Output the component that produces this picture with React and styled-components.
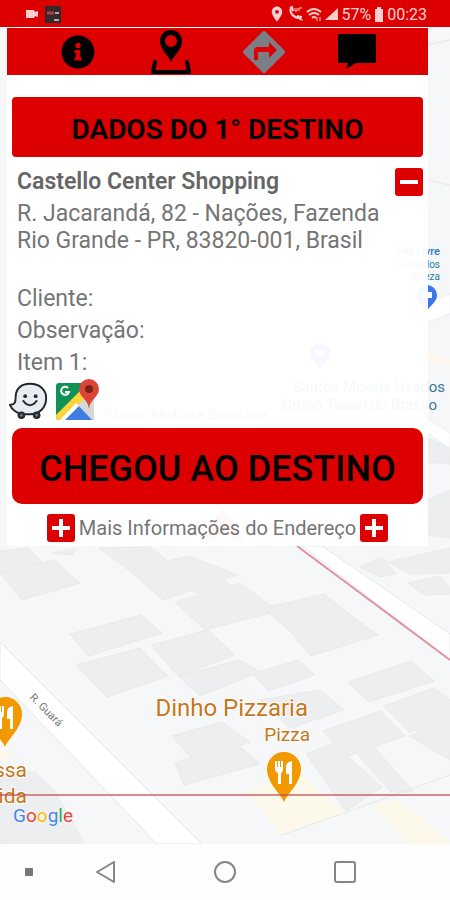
import React from "react";
import styled, { createGlobalStyle } from "styled-components";
import { FaInfoCircle } from "react-icons/fa";
import { MdLocationOn } from "react-icons/md";

const red = "#dc0000";
const pale = "#ffd0d0";

const GlobalStyle = createGlobalStyle`
  * {
    box-sizing: border-box;
  }
  body {
    margin: 0;
    font-family: Roboto, "Liberation Sans", sans-serif;
  }
  button {
    font-family: inherit;
    border: 0;
    padding: 0;
    cursor: pointer;
  }
  svg {
    display: block;
  }
`;

const Screen = styled.div`
  display: flex;
  flex-direction: column;
  min-height: 100vh;
  background-color: #fff;
`;

const StatusBar = styled.header`
  display: flex;
  align-items: center;
  justify-content: space-between;
  height: 27px;
  padding: 1px 23px 0 24px;
  background-color: ${red};
  color: ${pale};
  font-size: 16px;
`;

const StatusGroup = styled.div`
  display: flex;
  align-items: center;
  gap: ${props => props.$gap}px;
`;

const MapArea = styled.main`
  position: relative;
  flex: 1;
  padding: 1px 22px 0 7px;
  background-color: #f5f7f8;
`;

const MapCanvas = styled.svg`
  position: absolute;
  top: 0;
  left: 0;
  width: 100%;
  height: 100%;
`;

const Brand = styled.a`
  position: absolute;
  left: 13px;
  bottom: 17px;
  font-size: 19px;
  line-height: 22px;
  text-decoration: none;
  text-shadow: 0 0 2px #fff;
`;

const Letter = styled.span`
  color: ${props => props.color};
`;

const Panel = styled.section`
  position: relative;
  padding-bottom: 4px;
  background-color: rgba(255, 255, 255, 0.95);
  color: #757575;
`;

const Toolbar = styled.nav`
  display: grid;
  grid-template-columns: repeat(4, 1fr);
  height: 47px;
  padding: 0 24px;
  background-color: ${red};
`;

const ToolButton = styled.button`
  display: flex;
  align-items: center;
  justify-content: center;
  background: none;
  color: #000;
`;

const Body = styled.div`
  display: flex;
  flex-direction: column;
  padding: 22px 5px 0;
`;

const MainButton = styled.button`
  height: ${props => (props.$large ? 76 : 60)}px;
  padding-top: ${props => (props.$large ? 6 : 4)}px;
  border-radius: ${props => (props.$large ? 10 : 4)}px;
  background-color: ${red};
  color: #000;
  font-size: ${props => (props.$large ? 36 : 28)}px;
  font-weight: ${props => (props.$large ? 500 : 600)};
  white-space: nowrap;
`;

const Place = styled.div`
  display: flex;
  justify-content: space-between;
  padding: 11px 0 0 5px;
`;

const Title = styled.h1`
  margin: 0 0 4px;
  font-size: 23px;
  line-height: 28px;
  font-weight: 600;
  color: #666;
`;

const Address = styled.p`
  margin: 0;
  font-size: 23px;
  line-height: 27px;
`;

const Details = styled.ul`
  list-style: none;
  margin: 29px 0 0;
  padding: 0 5px;
  font-size: 23px;
  line-height: 32px;
`;

const Apps = styled.div`
  display: flex;
  gap: 6px;
  height: 49px;
  margin-left: -4px;
`;

const AppButton = styled.button`
  background: none;
  width: 42px;
  height: 42px;
`;

const SquareButton = styled.button`
  display: flex;
  flex: none;
  align-items: center;
  justify-content: center;
  width: 28px;
  height: 28px;
  border-radius: 3px;
  background-color: ${red};
`;

const More = styled.div`
  display: flex;
  align-items: center;
  justify-content: center;
  gap: 4px;
  padding-top: 10px;
  font-size: 20px;
  line-height: 28px;
  white-space: nowrap;
`;

const NavBar = styled.footer`
  display: grid;
  grid-template-columns: 46px 1fr 1fr 1fr 45px;
  align-items: center;
  height: 56px;
  background-color: #fdfdfd;
`;

const NavButton = styled.button`
  display: flex;
  justify-content: center;
  padding-left: ${props => (props.$small ? 12 : 0)}px;
  background: none;
`;

const Blocks = styled.g`
  fill: #eceef0;
  stroke: #e8eaec;
`;

const blocks = [
  "0,551 28,548 42,562 0,574",
  "0,573 54,560 80,583 22,600",
  "52,553 76,549 72,555",
  "99,548 150,547 170,563 130,571",
  "130,571 188,556 237,575 163,600",
  "163,573 210,600 240,590 190,562",
  "175,602 240,583 278,611 205,630",
  "70,634 141,615 162,633 88,656",
  "76,665 140,648 168,676 107,697",
  "151,645 208,630 235,655 178,676",
  "178,676 240,660 261,672 200,696",
  "172,736 222,722 250,742 194,761",
  "175,763 235,742 260,764 184,785",
  "0,773 35,772 54,790 85,844 0,844",
  "264,608 324,594 356,619 295,636",
  "295,638 357,620 378,635 311,656",
  "253,674 298,660 315,675 268,691",
  "348,682 411,661 434,681 369,702",
  "384,706 434,688 450,700 450,724 409,732",
  "409,736 450,721 450,760",
  "323,731 380,711 405,736 346,757",
  "260,700 320,690 344,710 290,728",
  "306,754 333,743 382,787 346,811",
  "352,748 373,746 414,792 391,792",
  "360,567 382,557 396,574 380,577",
  "408,583 440,576 450,588 450,594 425,595",
  "388,562 450,548 450,573 410,574",
  "428,500 450,490 450,538 428,535",
  "428,438 450,448 450,464 428,462"
];

const pin = "M0 0C-3-8-17-19-17-33a17 17 0 0 1 34 0C17-19 3-8 0 0z";

const FoodPin = ({ x, y }) => (
  <g transform={`translate(${x} ${y})`}>
    <path d={pin} fill="#f29900" />
    <g fill="#fff">
      <path d="M-9-41h2v6h1v-6h2v6h1v-6h2v8q0 3-2 4v11h-3v-11q-3-1-3-4z" />
      <path d="M8-41v23H5v-10H2v-7q0-5 6-6z" />
    </g>
  </g>
);

const BluePin = ({ x, y }) => (
  <g transform={`translate(${x} ${y})`}>
    <path d="M0 0C-2-7-10-9-10-17a10 10 0 0 1 20 0C10-9 2-7 0 0z" fill="#3b78e7" />
    <path d="M-5-20h10v6H-5z" fill="#fff" />
  </g>
);

const CityMap = () => (
  <MapCanvas viewBox="0 27 450 817" preserveAspectRatio="xMidYMid slice" role="img" aria-label="Mapa">
    <path d="M0 27h450v817H0z" fill="#f5f7f8" />
    <Blocks>
      {blocks.map(points => (
        <polygon key={points} points={points} />
      ))}
    </Blocks>
    <g fill="#fcf8ea">
      <path d="M247 791l50-20 47 41-62 23z" />
      <path d="M372 805l26-6 52 43v2h-41z" />
      <path d="M428 352l22 8v6l-22-4z" />
      <path d="M0 750l14 3-10 7H0z" />
    </g>
    <g fill="none" stroke="#e5e8ea">
      <path d="M282 835L450 775" />
      <path d="M428 45l22-5M428 180l22 5" />
    </g>
    <path d="M0 642l202 202h-45L0 680z" fill="#fff" stroke="#e4e7e9" />
    <path d="M302 546h20l128 88v26z" fill="#fff" stroke="#e6e9eb" />
    <path d="M405 310l45-16v20l-45 16zM410 408l40 25v15l-40-26z" fill="#fff" stroke="#eceef0" />
    <path d="M222 508l23 36-23-10-22 10z" fill="#f06070" />
    <path d="M297 546l153 114" stroke="#de93a0" strokeWidth="2" />
    <BluePin x="427" y="312" />
    <BluePin x="320" y="370" />
    <g fill="#2a7d9c" textAnchor="end">
      <text x="440" y="255" fontSize="11" fontWeight="500" fill="#2878b8">Pet Livre</text>
      <text x="440" y="268" fontSize="10">Cuidados</text>
      <text x="440" y="280" fontSize="10">Beleza</text>
    </g>
    <g fill="#39789c" fontSize="15" textAnchor="end">
      <text x="445" y="392">Santos Moveis Usados</text>
      <text x="437" y="410">Grupo Tauan do Brasilo</text>
    </g>
    <text x="105" y="420" fontSize="15" fill="#7d8a96">Status Molleza Estofaria</text>
    <text transform="translate(29 698) rotate(45)" fontSize="11" fill="#777">
      R. Guará
    </text>
    <FoodPin x="5" y="747" />
    <g fill="#c5781b" stroke="#fff" strokeWidth="2" paintOrder="stroke" textAnchor="end">
      <text x="308" y="716" fontSize="24">Dinho Pizzaria</text>
      <text x="310" y="741" fontSize="19">Pizza</text>
      <text x="27" y="777" fontSize="21">Nossa</text>
      <text x="27" y="803" fontSize="21">Avenida</text>
    </g>
    <FoodPin x="284" y="802" />
    <path d="M0 795h450" stroke="#c94b55" strokeOpacity="0.65" strokeWidth="2" />
  </MapCanvas>
);

const PinTrayIcon = () => (
  <svg width="42" height="44" viewBox="0 0 42 44">
    <path
      fillRule="evenodd"
      d="M21 32C19 26 10 20 10 11a11 11 0 0 1 22 0c0 9-9 15-11 21zM21 5a6 6 0 1 0 0 12 6 6 0 0 0 0-12z"
    />
    <path d="M5 32L3 42h36l-2-10" fill="none" stroke="#000" strokeWidth="4" strokeLinecap="round" strokeLinejoin="round" />
  </svg>
);

const TurnIcon = () => (
  <svg width="46" height="46" viewBox="0 0 46 46">
    <path d="M23 4l19 19-19 19L4 23z" fill="#7c7e87" stroke="#7c7e87" strokeWidth="4" strokeLinejoin="round" />
    <path d="M13 31v-9q0-4 4-4h11v-5l8 8-8 8v-6H17v8z" fill={red} />
  </svg>
);

const ChatIcon = () => (
  <svg width="38" height="36" viewBox="0 0 38 36">
    <path d="M1 0h36q1 0 1 1v27q0 1-1 1H18L8 35l2-6H1q-1 0-1-1V1q0-1 1-1z" />
  </svg>
);

const WazeIcon = () => (
  <svg width="42" height="42" viewBox="0 0 42 44">
    <path
      d="M1 27c6 0 6-4 6-8C7 10 13 5 22 5c10 0 17 6 17 15 0 10-7 17-17 17h-7C9 37 3 32 1 27z"
      fill="#e9edf2"
      stroke="#20242c"
      strokeWidth="2"
      strokeLinejoin="round"
    />
    <g fill="#252b33">
      <circle cx="17" cy="18" r="2" />
      <circle cx="28" cy="18" r="2" />
      <circle cx="13" cy="38" r="4" />
      <circle cx="29" cy="38" r="4" />
    </g>
    <g fill="#697785">
      <circle cx="13" cy="38" r="1.5" />
      <circle cx="29" cy="38" r="1.5" />
    </g>
    <path d="M15 23q7 9 14 0" fill="none" stroke="#252b33" strokeWidth="2" strokeLinecap="round" />
  </svg>
);

const MapsIcon = () => (
  <svg width="44" height="42" viewBox="0 0 44 42">
    <rect y="4" width="38" height="37" rx="3" fill="#109255" />
    <path d="M38 7v31q0 3-3 3L19 25z" fill="#d5d8da" />
    <path d="M3 41l17-17 16 17z" fill="#3f7de0" />
    <path d="M0 36L26 10l6 7L5 41H3q-3 0-3-3z" fill="#fbd53b" />
    <path d="M4 41l16-17 3 3L9 41z" fill="#fff" />
    <path d="M12 9a4 4 0 1 0 1 4H9" fill="none" stroke="#fff" strokeWidth="2" />
    <path d="M33 30C32 20 23 18 23 10a10 10 0 0 1 20 0c0 8-9 10-10 20z" fill="#dc4437" />
    <circle cx="33" cy="10" r="4" fill="#7c2119" />
  </svg>
);

const SignIcon = ({ plus }) => (
  <svg width="20" height="20" viewBox="0 0 20 20" stroke="#fff" strokeWidth="4">
    <path d={plus ? "M1 10h18M10 1v18" : "M1 10h18"} />
  </svg>
);

const brand = [
  ["G", "#4285f4"],
  ["o", "#ea4335"],
  ["o", "#fbbc05"],
  ["g", "#4285f4"],
  ["l", "#34a853"],
  ["e", "#ea4335"]
];

const App = () => (
  <Screen>
    <GlobalStyle />
    <StatusBar>
      <StatusGroup $gap={6}>
        <svg width="15" height="10" viewBox="0 0 15 10" fill={pale}>
          <path d="M2 1h8l1 2 3-1v6l-3-1-1 2H2z" />
        </svg>
        <svg width="16" height="17" viewBox="0 0 16 17">
          <path d="M0 0h16v17H0z" fill="#35292b" />
          <path d="M2 7h7" stroke="#b04048" strokeWidth="3" />
          <path d="M10 7h4M9 14h5" stroke="#b9a7a8" strokeWidth="2" />
        </svg>
      </StatusGroup>
      <StatusGroup $gap={2}>
        <MdLocationOn size={18} />
        <svg width="16" height="16" viewBox="0 0 16 16" fill="none" stroke={pale}>
          <path d="M3 2c-2 4 2 10 9 10" strokeWidth="2" />
          <path d="M2 2l2-1 1 4M9 10l4 1-1 3" strokeWidth="2" />
          <path d="M7 2v3h2V2M11 5V2h3M14 13v2" />
        </svg>
        <svg width="16" height="16" viewBox="0 0 16 16" fill="none" stroke={pale} strokeWidth="2">
          <path d="M1 6q7-6 14 0M3 9q5-4 10 0M6 12q2-2 4 0" />
          <path d="M11 15v-4M14 11v4" strokeWidth="1" />
        </svg>
        <svg width="15" height="14" viewBox="0 0 15 14" fill={pale}>
          <path d="M1 13L14 1v12z" />
        </svg>
        <span>57%</span>
        <svg width="12" height="15" viewBox="0 0 12 15" fill={pale}>
          <path d="M4 0h4v2h2v13H2V2h2z" />
        </svg>
        <span>00:23</span>
      </StatusGroup>
    </StatusBar>

    <MapArea>
      <CityMap />
      <Brand href="#google">
        {brand.map(([letter, color], i) => (
          <Letter key={i} color={color}>{letter}</Letter>
        ))}
      </Brand>
      <Panel>
        <Toolbar>
          <ToolButton aria-label="Informações">
            <FaInfoCircle size={34} />
          </ToolButton>
          <ToolButton aria-label="Local">
            <PinTrayIcon />
          </ToolButton>
          <ToolButton aria-label="Rota">
            <TurnIcon />
          </ToolButton>
          <ToolButton aria-label="Mensagens">
            <ChatIcon />
          </ToolButton>
        </Toolbar>
        <Body>
          <MainButton>DADOS DO 1° DESTINO</MainButton>
          <Place>
            <div>
              <Title>Castello Center Shopping</Title>
              <Address>R. Jacarandá, 82 - Nações, Fazenda Rio Grande - PR, 83820-001, Brasil</Address>
            </div>
            <SquareButton aria-label="Recolher">
              <SignIcon />
            </SquareButton>
          </Place>
          <Details>
            <li>Cliente:</li>
            <li>Observação:</li>
            <li>Item 1:</li>
          </Details>
          <Apps>
            <AppButton aria-label="Waze">
              <WazeIcon />
            </AppButton>
            <AppButton aria-label="Google Maps">
              <MapsIcon />
            </AppButton>
          </Apps>
          <MainButton $large>CHEGOU AO DESTINO</MainButton>
          <More>
            <SquareButton aria-label="Mostrar mais">
              <SignIcon plus />
            </SquareButton>
            <span>Mais Informações do Endereço</span>
            <SquareButton aria-label="Mostrar mais">
              <SignIcon plus />
            </SquareButton>
          </More>
        </Body>
      </Panel>
    </MapArea>

    <NavBar>
      <NavButton $small aria-label="Ocultar">
        <svg width="8" height="8" fill="#777">
          <rect width="8" height="8" rx="1" />
        </svg>
      </NavButton>
      <NavButton aria-label="Voltar">
        <svg width="22" height="22" fill="none" stroke="#858585" strokeWidth="2" strokeLinejoin="round">
          <path d="M2 11L19 1v20z" />
        </svg>
      </NavButton>
      <NavButton aria-label="Início">
        <svg width="22" height="22" fill="none" stroke="#858585" strokeWidth="2">
          <circle cx="11" cy="11" r="10" />
        </svg>
      </NavButton>
      <NavButton aria-label="Recentes">
        <svg width="22" height="22" fill="none" stroke="#858585" strokeWidth="2">
          <rect x="1" y="1" width="20" height="20" rx="2" />
        </svg>
      </NavButton>
    </NavBar>
  </Screen>
);

export default App;
